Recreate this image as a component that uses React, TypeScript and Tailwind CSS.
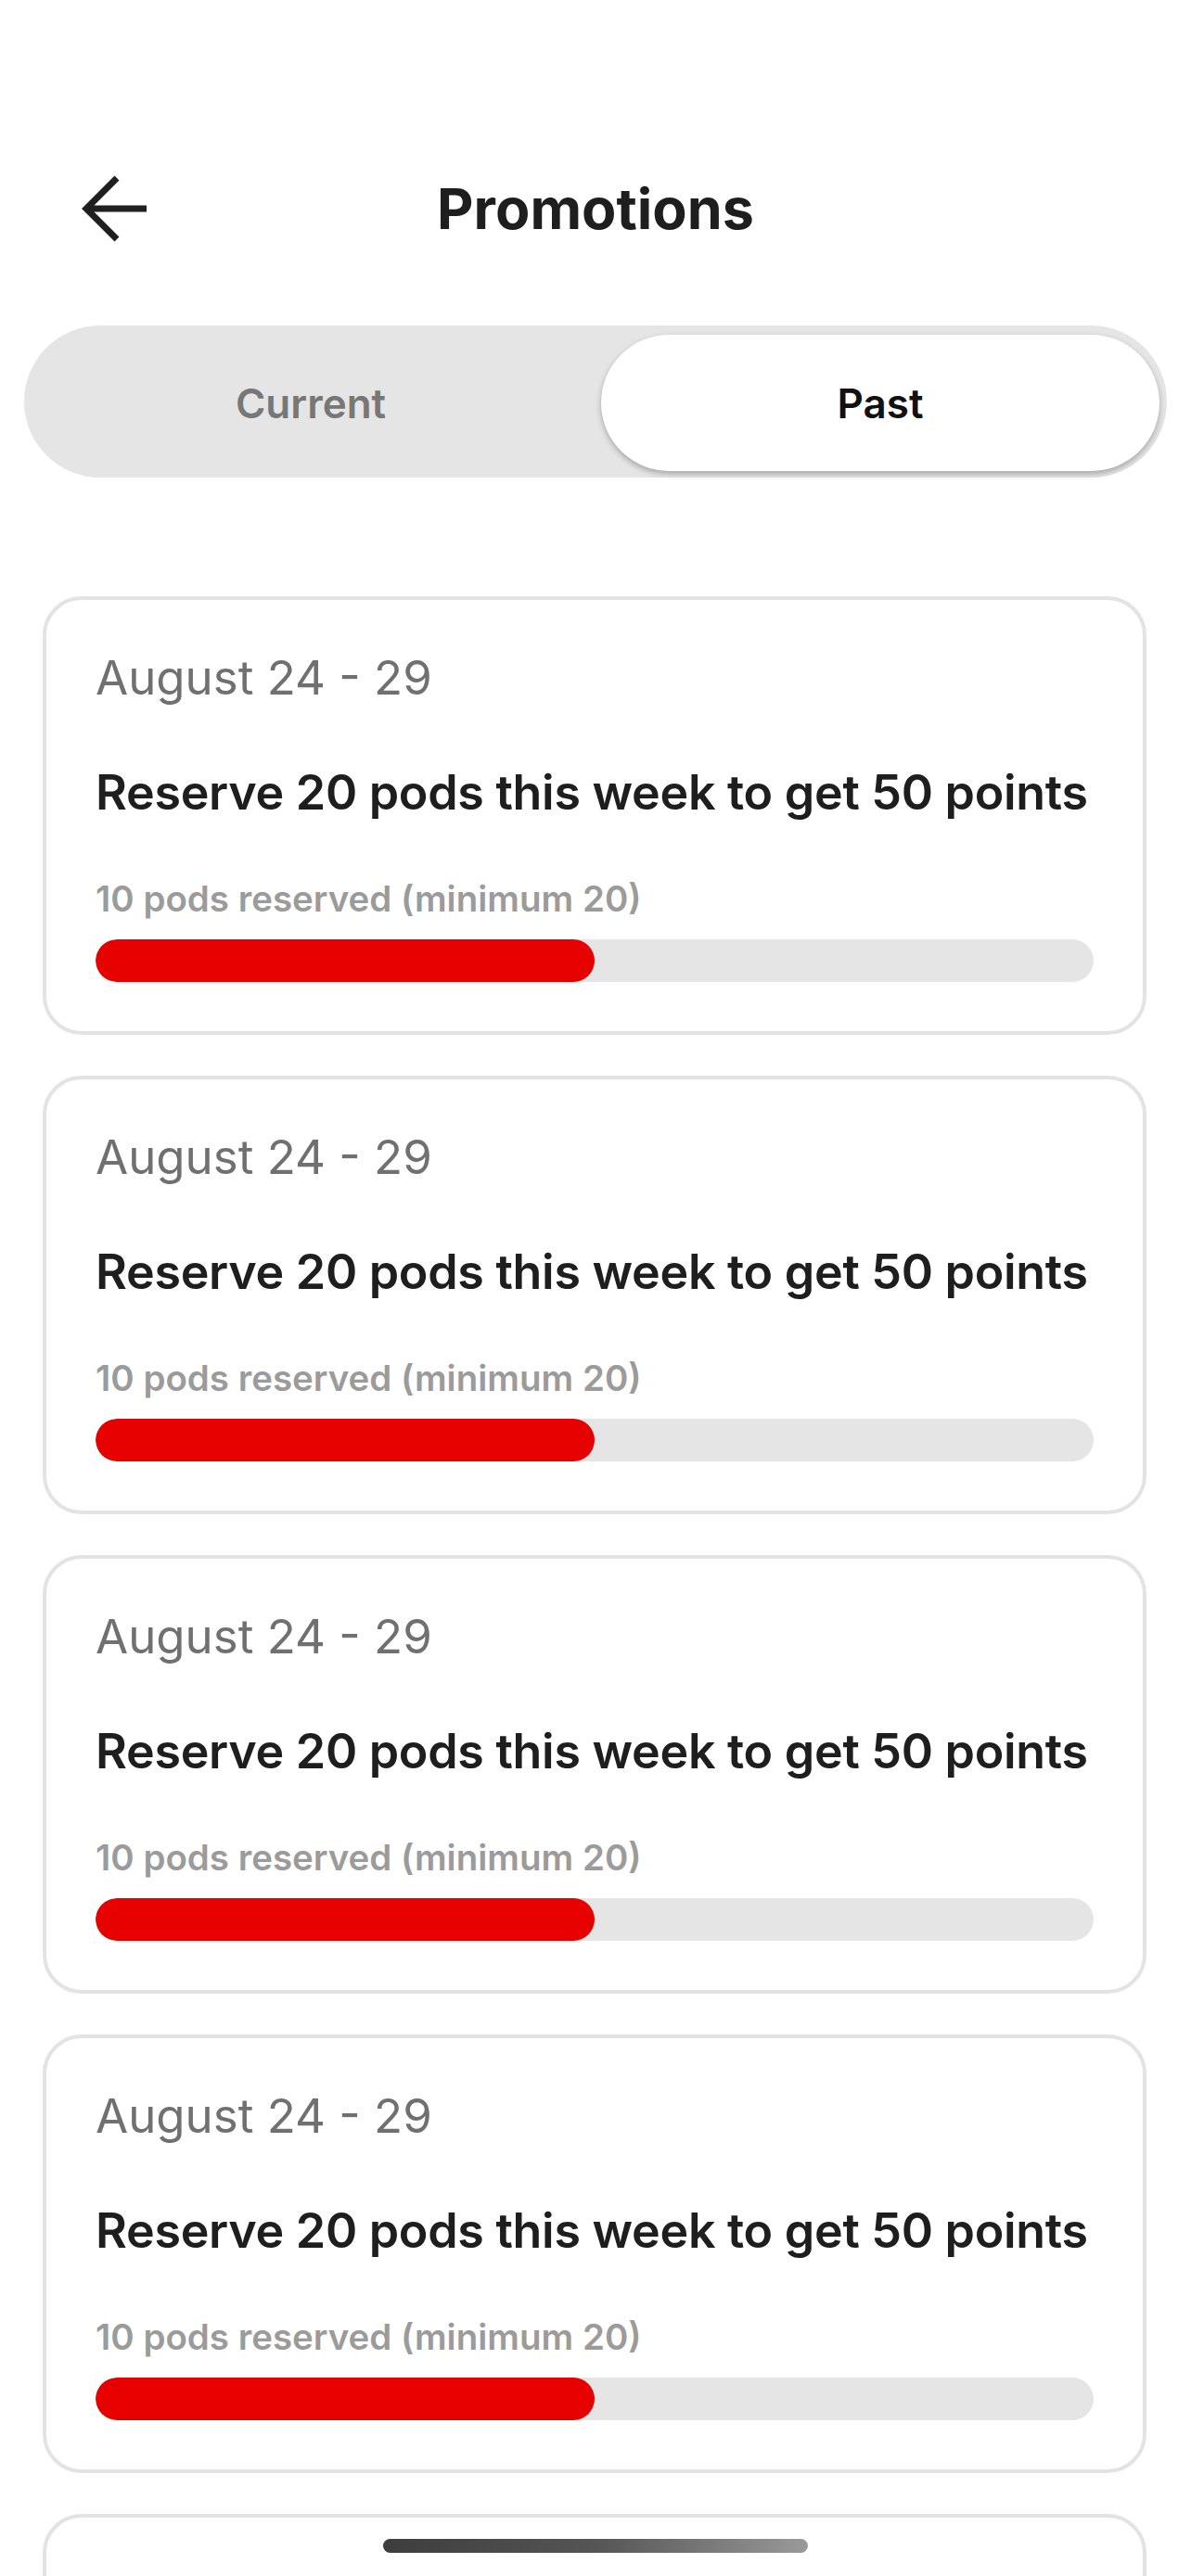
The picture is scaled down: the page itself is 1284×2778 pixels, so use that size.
import React from "react";

const font = { fontFamily: "Inter, 'Noto Sans', sans-serif" };

function BackArrow() {
    return (
        <svg width="72" height="72" viewBox="0 0 72 72" fill="none">
            <path
                d="M70 36H6M38 3L5 36l33 33"
                stroke="#1f1f1f"
                strokeWidth="7"
                strokeLinejoin="miter"
            />
        </svg>
    );
}

function PromoCard() {
    return (
        <div className="border-[4px] border-[#e3e3e3] rounded-[42px] bg-white px-[53px] pt-[54px] pb-[53px]">
            <p className="text-[51px] leading-[60px] text-[#707070]">August 24 - 29</p>
            <h2 className="mt-[64px] text-[52px] leading-[60px] font-semibold text-[#1e1e1e] tracking-[-0.3px] whitespace-nowrap">
                Reserve 20 pods this week to get 50 points
            </h2>
            <p className="mt-[62px] text-[38.5px] leading-[44px] font-semibold text-[#9b9b9b]">
                10 pods reserved (minimum 20)
            </p>
            <div className="mt-[22px] h-[46px] rounded-full bg-[#e5e5e5] overflow-hidden">
                <div className="h-full rounded-full bg-[#e60000]" style={{ width: "50%" }} />
            </div>
        </div>
    );
}

export default function App() {
    return (
        <div style={font} className="relative w-[1284px] h-[2778px] overflow-hidden bg-white">
            <div className="pt-[175px] h-[275px] grid grid-cols-[1fr_auto_1fr] items-center px-[88px]">
                <div className="flex items-center">
                    <BackArrow />
                </div>
                <h1 className="text-[61px] leading-[70px] font-bold text-[#1e1e1e]">Promotions</h1>
                <div />
            </div>

            <div className="mt-[76px] mx-[26px] h-[164px] rounded-full bg-[#e5e5e5] grid grid-cols-2 gap-[12px] px-[8px] pt-[10px] pb-[7px]">
                <button className="flex items-center justify-center text-[44px] font-semibold text-[#777777]">
                    Current
                </button>
                <button className="flex items-center justify-center rounded-full bg-white text-[44px] font-semibold text-[#111111] shadow-[0_3px_6px_rgba(0,0,0,0.28)]">
                    Past
                </button>
            </div>

            <div className="mt-[128px] ml-[46px] mr-[48px] flex flex-col gap-[44px]">
                <PromoCard />
                <PromoCard />
                <PromoCard />
                <PromoCard />
                <div className="h-[473px] border-[4px] border-[#e3e3e3] rounded-[42px] bg-white" />
            </div>

            <div className="absolute left-[413px] top-[2738px] w-[458px] h-[15px] rounded-full bg-gradient-to-r from-[#3d3d3d] via-[#555555] to-[#9a9a9a]" />
        </div>
    );
}
